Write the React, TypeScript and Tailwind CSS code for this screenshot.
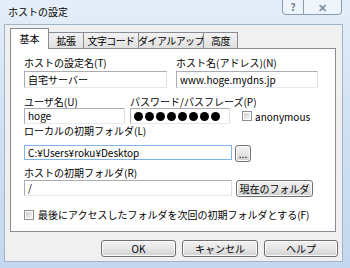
import React from 'react';

const font = { fontFamily: '"Noto Sans CJK JP", "Noto Sans", sans-serif' };

function Tab({ label, width, selected }: { label: string; width: string; selected?: boolean }) {
  if (selected) {
    return (
      <div
        className={`${width} relative z-10 -mb-px flex h-[21px] items-start justify-center whitespace-nowrap border border-b-0 border-[#898c95] bg-white pt-[3px] text-[10px] leading-[13px] text-black`}
      >
        {label}
      </div>
    );
  }
  return (
    <div
      className={`${width} -ml-px flex h-[16px] items-center justify-center whitespace-nowrap border border-b-0 border-[#898c95] bg-gradient-to-b from-[#f2f2f2] to-[#e0e0e0] text-[10px] leading-[13px] tracking-[-0.6px] text-black`}
    >
      {label}
    </div>
  );
}

function Field({ value, className, focused }: { value?: string; className: string; focused?: boolean }) {
  return (
    <div
      className={`${className} flex items-center border bg-white px-[3px] text-[10px] leading-[12px] text-black ${
        focused ? 'border-[#7eb4ea]' : 'border-[#abadb3] border-b-[#e3e9ef] border-r-[#dbdfe6]'
      }`}
    >
      {value}
    </div>
  );
}

function Button({ label, className }: { label: string; className: string }) {
  return (
    <div
      className={`${className} flex items-center justify-center whitespace-nowrap rounded-[3px] border border-[#707070] bg-gradient-to-b from-[#f2f2f2] via-[#e6e6e6] to-[#d0d0d0] text-[10px] leading-[12px] text-black shadow-[inset_0_0_0_1px_#fcfcfc]`}
    >
      {label}
    </div>
  );
}

function CheckBox() {
  return (
    <div className="flex h-[10px] w-[10px] shrink-0 items-center justify-center border border-[#8e8f8f] bg-white">
      <div className="h-[6px] w-[6px] bg-gradient-to-br from-[#cbcfd5] to-[#f6f6f6]" />
    </div>
  );
}

export default function App() {
  return (
    <div
      className="flex h-[268px] w-[350px] flex-col overflow-hidden bg-gradient-to-b from-[#e4eef9] via-[#cfe0f2] to-[#c3d8ef]"
      style={font}
    >
      {/* Title bar */}
      <div className="flex h-[24px] shrink-0 items-start justify-between">
        <div className="pl-[8px] pt-[5px] text-[10px] leading-[14px] text-black [text-shadow:0_0_6px_#ffffff]">
          ホストの設定
        </div>
        <div className="mr-[8px] -mt-px flex">
          <div className="flex h-[16px] w-[22px] items-center justify-center rounded-bl-[4px] border border-[#8a9aad] bg-white/40 text-[10px] font-bold leading-none text-[#6f7f92]">
            ?
          </div>
          <div className="-ml-px flex h-[16px] w-[39px] items-center justify-center rounded-br-[4px] border border-[#8a9aad] bg-white/40 text-[11px] font-bold leading-none text-[#7f8fa2]">
            ✕
          </div>
        </div>
      </div>

      {/* Client area */}
      <div className="ml-[4px] mr-[7px] flex h-[238px] flex-col border border-[#a3b3c6] bg-[#f0f0f0] pl-[5px] pt-[3px]">
        {/* Tabs */}
        <div className="flex h-[20px] items-end">
          <Tab label="基本" width="w-[39px]" selected />
          <Tab label="拡張" width="w-[36px]" />
          <Tab label="文字コード" width="w-[56px]" />
          <Tab label="ダイアルアップ" width="w-[66px]" />
          <Tab label="高度" width="w-[35px]" />
        </div>

        {/* Panel */}
        <div className="flex h-[184px] w-[326px] flex-col border border-[#898c95] bg-white pl-[13px] pt-[7px] text-[10px] leading-[13px] text-black">
          {/* Row 1 */}
          <div className="flex gap-[9px]">
            <div className="flex w-[143px] flex-col">
              <div className="h-[13px]">ホストの設定名(T)</div>
              <Field value="自宅サーバー" className="mt-[2px] h-[17px] w-[143px]" />
            </div>
            <div className="flex w-[142px] flex-col">
              <div className="h-[13px]">ホスト名(アドレス)(N)</div>
              <Field value="www.hoge.mydns.jp" className="mt-[2px] h-[17px] w-[142px]" />
            </div>
          </div>

          {/* Row 2 */}
          <div className="mt-[7px] flex gap-[5px]">
            <div className="flex w-[101px] flex-col">
              <div className="h-[13px]">ユーザ名(U)</div>
              <Field value="hoge" className="h-[16px] w-[101px]" />
            </div>
            <div className="flex flex-col">
              <div className="h-[13px] whitespace-nowrap">パスワード/パスフレーズ(P)</div>
              <div className="flex items-center">
                <div className="flex h-[16px] w-[100px] items-center gap-[2px] border border-[#abadb3] border-b-[#e3e9ef] border-r-[#dbdfe6] bg-white pl-[3px]">
                  {[0, 1, 2, 3, 4, 5, 6, 7].map((i) => (
                    <span key={i} className="h-[9px] w-[9px] rounded-full bg-black" />
                  ))}
                </div>
                <div className="ml-[12px] flex items-center gap-[3px]">
                  <CheckBox />
                  <span>anonymous</span>
                </div>
              </div>
            </div>
          </div>

          {/* Row 3 */}
          <div className="h-[13px]">ローカルの初期フォルダ(L)</div>
          <div className="mt-[8px] flex items-start gap-[3px]">
            <Field value="C:¥Users¥roku¥Desktop" className="h-[15px] w-[208px]" focused />
            <Button label="..." className="h-[17px] w-[16px]" />
          </div>

          {/* Row 4 */}
          <div className="mt-[4px] h-[13px]">ホストの初期フォルダ(R)</div>
          <div className="mt-[1px] flex items-start gap-[4px]">
            <Field value="/" className="h-[16px] w-[208px]" />
            <Button label="現在のフォルダ" className="h-[17px] w-[77px]" />
          </div>

          {/* Row 5 */}
          <div className="mt-[11px] flex items-center gap-[4px]">
            <CheckBox />
            <span>最後にアクセスしたフォルダを次回の初期フォルダとする(F)</span>
          </div>
        </div>

        {/* Dialog buttons */}
        <div className="mt-[8px] flex justify-end gap-[6px] pr-[4px]">
          <Button label="OK" className="h-[17px] w-[75px]" />
          <Button label="キャンセル" className="h-[17px] w-[76px]" />
          <Button label="ヘルプ" className="h-[17px] w-[74px]" />
        </div>
      </div>
    </div>
  );
}
